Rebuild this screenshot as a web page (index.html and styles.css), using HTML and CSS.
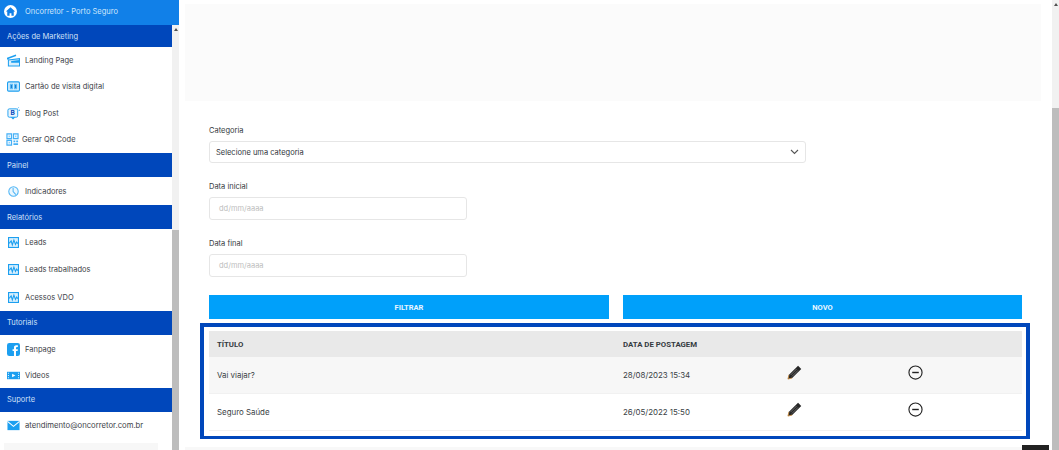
FILE: index.html
```html
<!DOCTYPE html>
<html lang="pt-BR">
<head>
  <meta charset="UTF-8" />
  <title>Oncorretor - Porto Seguro</title>
  <link rel="stylesheet" href="styles.css">
</head>
<body>
  <div class="app">
    <aside class="sidebar">
      <div class="brand">
        <span class="brand-logo">
          <svg width="13" height="13" viewBox="0 0 14 14"><path d="M7 2.500 2 7h1.500v4.500h2.500V9h2v2.500h2.500V7H12z" fill="#1180e8"/></svg>
        </span>
        <span>Oncorretor - Porto Seguro</span>
      </div>
      <div class="side-body">
        <nav class="menu">
          <div class="section section-first">Ações de Marketing</div>
          <a class="item">
            <svg class="ico" viewBox="0 0 14 14"><path d="M0 4 9.500 .6l.5 1.500L2 5v1H0z" fill="#1c9ff0"/><path d="M1.500 6.500 13.500 5v8h-12z" fill="#d8effd" stroke="#1c9ff0" stroke-width="1.100"/><path d="M4.500 7.500l9-1v3h-9z" fill="#1c9ff0"/></svg>
            Landing Page
          </a>
          <a class="item">
            <svg class="ico" viewBox="0 0 14 14"><rect x=".6" y="2" width="12.800" height="10" rx="1.200" fill="#d8effd" stroke="#1c9ff0" stroke-width="1.200"/><path d="M3 4h3.500v6H3zM7.500 4H11v6H7.500z" fill="#5dbcf7"/><path d="M4.200 5.500h1v3h-1zM8.800 5.500h1v3h-1z" fill="#0d6fc4"/></svg>
            Cartão de visita digital
          </a>
          <a class="item">
            <svg class="ico" viewBox="0 0 14 14"><rect x="1" y="2" width="10.500" height="9" rx="1.500" fill="#eaf6fe" stroke="#1c9ff0"/><path d="M4 11h5l-2.500 2.500z" fill="#1c9ff0"/><path d="M11.500 1.500l1-1M12.500 3.500h1.500" stroke="#1c9ff0"/><text x="6.200" y="9" class="ico-b">B</text></svg>
            Blog Post
          </a>
          <a class="item item-qr">
            <svg class="ico" viewBox="0 0 14 14"><path d="M1 1h5v5H1zM8 1h5v5H8zM1 8h5v5H1z" fill="#e3f3fe" stroke="#45b0f6" stroke-width="1.200"/><path d="M3 3h1v1H3zM10 3h1v1h-1zM3 10h1v1H3zM8 8h2v2H8zM11 8h2v2h-2zM8 11h5v2H8z" fill="#45b0f6"/></svg>
            Gerar QR Code
          </a>
          <div class="section">Painel</div>
          <a class="item item-single">
            <svg class="ico ico-sm" viewBox="0 0 14 14"><circle cx="7" cy="7" r="6" fill="#eaf6fe" stroke="#4db4f5" stroke-width="1.300"/><path d="M6.500 2.500V7l3.500 4" fill="none" stroke="#4db4f5" stroke-width="1.300"/></svg>
            Indicadores
          </a>
          <div class="section">Relatórios</div>
          <a class="item item-wide">
            <svg class="ico ico-sm" viewBox="0 0 14 14"><use href="#chart"/></svg>
            Leads
          </a>
          <a class="item item-wide">
            <svg class="ico ico-sm" viewBox="0 0 14 14"><use href="#chart"/></svg>
            Leads trabalhados
          </a>
          <a class="item item-wide">
            <svg class="ico ico-sm" viewBox="0 0 14 14"><use href="#chart"/></svg>
            Acessos VDO
          </a>
          <div class="section">Tutoriais</div>
          <a class="item item-low">
            <svg class="ico" viewBox="0 0 14 14"><rect width="14" height="14" rx="2.500" fill="#1c9ff0"/><path d="M9.700 14V8.600h1.700l.3-2H9.700V5.300c0-.6.3-1 1-1h1V2.500H10C8.300 2.500 7.500 3.500 7.500 5v1.600H6v2h1.500V14z" fill="#fff"/></svg>
            Fanpage
          </a>
          <a class="item item-low">
            <svg class="ico" viewBox="0 0 14 14"><path d="M0 3h14v8H0z" fill="#1c9ff0"/><path d="M5.500 5.200v3.600L9 7z" fill="#fff"/><path d="M1 4h1v1H1zM1 6.500h1v1H1zM1 9h1v1H1zM12 4h1v1h-1zM12 6.500h1v1h-1zM12 9h1v1h-1z" fill="#fff"/></svg>
            Videos
          </a>
          <div class="section">Suporte</div>
          <a class="item">
            <svg class="ico" viewBox="0 0 14 14"><path d="M.5 2h13v10H.5z" fill="#1c9ff0"/><path d="M.5 2.500 7 8l6.500-5.500" fill="none" stroke="#fff" stroke-width="1.100"/></svg>
            <span class="mail">atendimento@oncorretor.com.br</span>
          </a>
          <div class="menu-foot"></div>
        </nav>
        <div class="scroll scroll-side"><span class="arrow"></span><div class="thumb"></div></div>
      </div>
    </aside>

    <main class="content">
      <div class="page">
        <div class="banner"></div>
        <form class="filters">
          <label class="field-label">Categoria</label>
          <div class="select">
            <span>Selecione uma categoria</span>
            <svg width="9" height="6" viewBox="0 0 9 6"><path d="M1 1l3.500 3.500L8 1" fill="none" stroke="#555" stroke-width="1.100"/></svg>
          </div>
          <label class="field-label">Data inicial</label>
          <div class="input">dd/mm/aaaa</div>
          <label class="field-label">Data final</label>
          <div class="input">dd/mm/aaaa</div>
          <div class="actions">
            <button type="button" class="btn">FILTRAR</button>
            <button type="button" class="btn">NOVO</button>
          </div>
        </form>
        <div class="highlight">
          <table class="posts">
            <thead>
              <tr><th class="col-title">TÍTULO</th><th class="col-date">DATA DE POSTAGEM</th><th class="col-edit"></th><th></th></tr>
            </thead>
            <tbody>
              <tr class="odd">
                <td>Vai viajar?</td><td>28/08/2023 15:34</td>
                <td><svg class="act" viewBox="0 0 16 16"><use href="#pencil"/></svg></td>
                <td><svg class="act" viewBox="0 0 16 16"><use href="#minus"/></svg></td>
              </tr>
              <tr>
                <td>Seguro Saúde</td><td>26/05/2022 15:50</td>
                <td><svg class="act" viewBox="0 0 16 16"><use href="#pencil"/></svg></td>
                <td><svg class="act" viewBox="0 0 16 16"><use href="#minus"/></svg></td>
              </tr>
            </tbody>
          </table>
        </div>
        <div class="bottom-band"></div>
      </div>
      <div class="scroll scroll-main"><span class="arrow"></span><div class="thumb"></div></div>
      <div class="corner-tab"></div>
    </main>
  </div>

  <svg width="0" height="0" class="defs">
    <symbol id="chart" viewBox="0 0 14 14">
      <rect x=".7" y=".7" width="12.600" height="12.600" fill="#d8effd" stroke="#1c9ff0" stroke-width="1.400"/>
      <path d="M1.500 8 4 5l1.500 5 2-6 2 5.500L11 6.500l1.500 2" fill="none" stroke="#1c9ff0" stroke-width="1.400"/>
    </symbol>
    <symbol id="pencil" viewBox="0 0 16 16">
      <path d="M11.800.8 15.200 4.200 5.500 13.900 1 15l1.100-4.500z" fill="#262626"/>
      <path d="M10.300 4.200 3.800 10.700M11.800 5.700 5.300 12.200" stroke="#8d8d8d" stroke-width=".7"/>
      <path d="M2.100 10.500 1 15l4.500-1.100" fill="none" stroke="#c98a3c" stroke-width=".9"/>
    </symbol>
    <symbol id="minus" viewBox="0 0 16 16">
      <circle cx="8" cy="8" r="7" fill="none" stroke="#222" stroke-width="1.200"/>
      <path d="M4.500 8h7" stroke="#222" stroke-width="1.500"/>
    </symbol>
  </svg>
</body>
</html>
```

FILE: styles.css
```css
html, body {
  margin: 0;
  height: 450px;
  overflow: hidden;
  background: #fff;
  font-family: "Inter", "Liberation Sans", sans-serif;
  font-size: 7.5px;
  color: #343a40;
}
.defs { display: block; height: 0; }
.app {
  display: flex;
  height: 450px;
}

/* barra lateral */
.sidebar {
  width: 179px;
  flex: none;
  display: flex;
  flex-direction: column;
}
.brand {
  height: 25px;
  box-sizing: border-box;
  padding: 0 0 3px 4px;
  flex: none;
  background: #1180e8;
  color: #cfe6fb;
  display: flex;
  align-items: center;
  gap: 8px;
  font-size: 7.5px;
}
.brand-logo {
  width: 13px;
  height: 13px;
  border-radius: 50%;
  background: #fff;
  display: flex;
}
.side-body {
  flex: 1;
  display: flex;
  min-height: 0;
}
.menu {
  width: 172px;
  flex: none;
}
.section {
  height: 24px;
  background: #0047bb;
  color: #cfe0f7;
  display: flex;
  align-items: center;
  padding-left: 7px;
}
.section-first { height: 22px; }
.item {
  height: 26.5px;
  box-sizing: border-box;
  display: flex;
  align-items: center;
  gap: 5px;
  padding-left: 7px;
  color: #3c4148;
}
.item-wide { height: 27.33px; }
.item-single { height: 28px; }
.item-low { padding-top: 2px; }
.item-qr { padding-left: 6px; gap: 3px; }
.mail { font-size: 7.7px; }
.ico {
  width: 13px;
  height: 13px;
  flex: none;
}
.ico-sm {
  width: 11px;
  height: 11px;
  margin: 0 1px;
}
.ico-b {
  font-size: 7px;
  font-weight: 700;
  fill: #0047bb;
  text-anchor: middle;
}
.menu-foot {
  height: 7px;
  margin: 5px 14px 0 4px;
  background: #f7f7f7;
}

/* barras de rolagem */
.scroll {
  width: 7px;
  flex: none;
  background: #f1f1f1;
  display: flex;
  flex-direction: column;
}
.arrow {
  width: 0;
  height: 0;
  margin: 3px auto 0;
  border: 2px solid transparent;
  border-top: 0;
  border-bottom: 3px solid #505050;
}
.thumb {
  background: #bdbdbd;
  margin-top: 199px;
  flex: 1;
}
.scroll-main .thumb { margin-top: 102px; }

/* conteudo */
.content {
  flex: 1;
  display: flex;
  position: relative;
  min-width: 0;
}
.page {
  flex: 1;
  padding: 4px 11px 0 6px;
  min-width: 0;
}
.banner {
  height: 97px;
  background: #fbfbfb;
}
.filters {
  padding: 25px 19px 0 24px;
}
.field-label {
  display: block;
  height: 10px;
  line-height: 10px;
  margin-bottom: 5px;
}
.select, .input {
  box-sizing: border-box;
  border: 1px solid #e6e6e6;
  border-radius: 3px;
  display: flex;
  align-items: center;
  margin-bottom: 19px;
}
.select {
  width: 597px;
  height: 22px;
  padding: 0 6px;
  justify-content: space-between;
  color: #2f343a;
}
.input {
  width: 258px;
  height: 23px;
  padding: 0 9px;
  color: #bdbdbd;
}
.actions {
  display: grid;
  grid-template-columns: 400px 399px;
  gap: 14px;
  margin-top: -1px;
}
.btn {
  height: 24px;
  border: none;
  background: #00a0fa;
  color: #e8f6ff;
  font-family: "Roboto", "Liberation Sans", sans-serif;
  font-size: 7.5px;
  font-weight: 700;
}
.highlight {
  margin: 4px 0 0 15px;
  width: 830px;
  height: 116px;
  box-sizing: border-box;
  border: 4px solid #0047bb;
  border-bottom-width: 3px;
  padding: 4px 4px 0 5px;
}
.posts {
  width: 813px;
  border-collapse: collapse;
  table-layout: fixed;
  font-size: 7.9px;
}
.posts th {
  height: 26px;
  padding: 0 0 0 8px;
  background: #e9e9e9;
  text-align: left;
  font-family: "Roboto", "Liberation Sans", sans-serif;
  font-size: 7.8px;
  font-weight: 700;
}
.posts td {
  height: 36px;
  padding: 0 0 0 8px;
  border-bottom: 1px solid #f1f1f1;
  color: #3a3f45;
}
.posts .odd td { background: #f7f7f7; }
.col-title { width: 398px; }
.col-date { width: 156px; }
.col-edit { width: 113px; }
.act {
  width: 15px;
  height: 15px;
  display: block;
  margin-top: -5px;
}
.bottom-band {
  height: 3px;
  margin-top: 8px;
  background: #f8f8f8;
}
.corner-tab {
  position: absolute;
  right: 10px;
  bottom: 0;
  width: 27px;
  height: 5px;
  background: #222;
}
```
